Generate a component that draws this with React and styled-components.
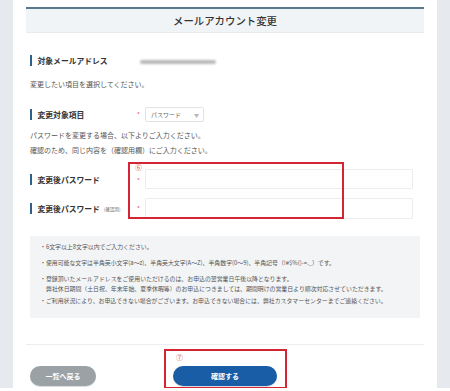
import React from 'react'
import styled, { createGlobalStyle } from 'styled-components'

const Global = createGlobalStyle`
  html, body {
    margin: 0;
    padding: 0;
    background: #fff;
    font-family: "Noto Sans CJK JP", "Noto Sans", sans-serif;
    color: #333;
  }
`

const Page = styled.div`
  padding: 0 13px;
  height: 388px;
  overflow: hidden;
  background: #e6eaee;
`

const Panel = styled.div`
  background: #fff;
  height: 100%;
  padding: 7px 13px 0;
  box-sizing: border-box;
`

const Header = styled.div`
  height: 26px;
  box-sizing: border-box;
  border-top: 2px solid #58788d;
  border-bottom: 1px solid #e8ecef;
  background: #f1f4f6;
  display: flex;
  align-items: center;
  justify-content: center;
  font-size: 10.4px;
  font-weight: 500;
  color: #333;
`

const Content = styled.div`
  padding: 0 4px;
`

const Row = styled.div`
  display: flex;
  align-items: center;
  height: ${p => p.h || 15}px;
  margin-top: ${p => p.mt || 0}px;
`

const Label = styled.div`
  width: 105px;
  flex: none;
  display: flex;
  align-items: center;
  font-size: 7.8px;
  font-weight: 700;
  color: #333;
  &::before {
    content: '';
    width: 1.5px;
    height: 11px;
    background: #2f5f8a;
    margin-right: 6px;
  }
`

const Small = styled.span`
  font-size: 4.5px;
  font-weight: 400;
  color: #666;
  margin-left: 4px;
`

const Req = styled.span`
  width: 8px;
  flex: none;
  font-size: 6px;
  line-height: 6px;
  color: #d9534f;
  margin-left: 2px;
  margin-top: ${p => p.low ? 3 : 0}px;
`

const Blurred = styled.span`
  display: block;
  width: 76px;
  height: 4px;
  margin-left: 5px;
  margin-top: 3px;
  border-radius: 2px;
  background: #b9b9b9;
  filter: blur(1.2px);
`

const Text = styled.p`
  margin: ${p => p.mt || 0}px 0 0;
  font-size: 7px;
  line-height: ${p => p.lh || 12}px;
  color: #555;
`

const Select = styled.div`
  width: 59px;
  height: 15px;
  box-sizing: border-box;
  border: 1px solid #e3e3e3;
  border-radius: 2px;
  display: flex;
  align-items: center;
  justify-content: space-between;
  padding: 0 4px 0 5px;
  font-size: 6px;
  color: #666;
  span { font-size: 5px; color: #b5b5b5; }
`

const Input = styled.div`
  width: 268px;
  height: ${p => p.h || 20}px;
  box-sizing: border-box;
  border: 1px solid #ececec;
  border-radius: 1px;
`

const Fields = styled.div`
  position: relative;
  padding-top: 12px;
`

const Mark = styled.div`
  position: absolute;
  left: ${p => p.l}px;
  top: ${p => p.t}px;
  width: ${p => p.w}px;
  height: ${p => p.h}px;
  border: 2px solid #d32533;
  box-sizing: border-box;
  pointer-events: none;
`

const Num = styled.span`
  position: absolute;
  left: ${p => p.l}px;
  top: ${p => p.t}px;
  font-size: 7px;
  line-height: 1;
  color: #d9534f;
`

const Notes = styled.ul`
  list-style: none;
  margin: 17px 0 0;
  padding: 6px 10px 8px;
  background: #f2f4f6;
  height: 82px;
  box-sizing: border-box;
  font-size: 5.9px;
  color: #555;
`

const Note = styled.li`
  line-height: 10px;
  margin-bottom: ${p => p.mb ?? 6}px;
  white-space: nowrap;
  span { display: block; padding-left: 6px; }
`

const Divider = styled.div`
  height: 1px;
  background: #eceef0;
  margin-top: 26px;
`

const Buttons = styled.div`
  position: relative;
  display: grid;
  grid-template-columns: 1fr auto 1fr;
  align-items: center;
  margin-top: 21px;
`

const Button = styled.button`
  height: 20px;
  border: none;
  border-radius: 10px;
  font-family: inherit;
  font-size: 7px;
  font-weight: 700;
  color: #fff;
  padding: 0;
  width: ${p => p.w}px;
  background: ${p => p.primary ? '#1a5da7' : '#9ba2a6'};
  box-shadow: 0 1px 1px rgba(0,0,0,0.15);
  justify-self: ${p => p.primary ? 'center' : 'start'};
  margin-left: ${p => p.primary ? 0 : 4}px;
`

export default function App() {
  return (
    <>
      <Global />
      <Page>
        <Panel>
          <Header>メールアカウント変更</Header>
          <Content>
            <Row mt={20}>
              <Label>対象メールアドレス</Label>
              <Blurred />
            </Row>
            <Text mt={10}>変更したい項目を選択してください。</Text>
            <Row mt={17}>
              <Label>変更対象項目</Label>
              <Req>*</Req>
              <Select>パスワード<span>▼</span></Select>
            </Row>
            <Text mt={6} lh={14.5}>
              パスワードを変更する場合、以下よりご入力ください。<br />
              確認のため、同じ内容を（確認用欄）にご入力ください。
            </Text>
            <Fields>
              <Row h={20}>
                <Label>変更後パスワード</Label>
                <Req low>*</Req>
                <Input />
              </Row>
              <Row mt={9} h={21}>
                <Label>変更後パスワード<Small>(確認用)</Small></Label>
                <Req>*</Req>
                <Input h={21} />
              </Row>
              <Mark l={98} t={5} w={216} h={57} />
              <Num l={105} t={7}>⑥</Num>
            </Fields>
            <Notes>
              <Note>・6文字以上8文字以内でご入力ください。</Note>
              <Note>・使用可能な文字は半角英小文字(a〜z)、半角英大文字(A〜Z)、半角数字(0〜9)、半角記号（!#$%()-=._）です。</Note>
              <Note mb={2}>
                ・登録頂いたメールアドレスをご使用いただけるのは、お申込の翌営業日午後以降となります。
                <span>弊社休日期間（土日祝、年末年始、夏季休暇等）のお申込につきましては、期間明けの営業日より順次対応させていただきます。</span>
              </Note>
              <Note mb={0}>・ご利用状況により、お申込できない場合がございます。お申込できない場合には、弊社カスタマーセンターまでご連絡ください。</Note>
            </Notes>
          </Content>
          <Divider />
          <Buttons>
            <Button w={66}>一覧へ戻る</Button>
            <Button primary w={104}>確認する</Button>
            <span />
            <Mark l={138} t={-17} w={123} h={40} />
            <Num l={150} t={-12}>⑦</Num>
          </Buttons>
        </Panel>
      </Page>
    </>
  )
}
